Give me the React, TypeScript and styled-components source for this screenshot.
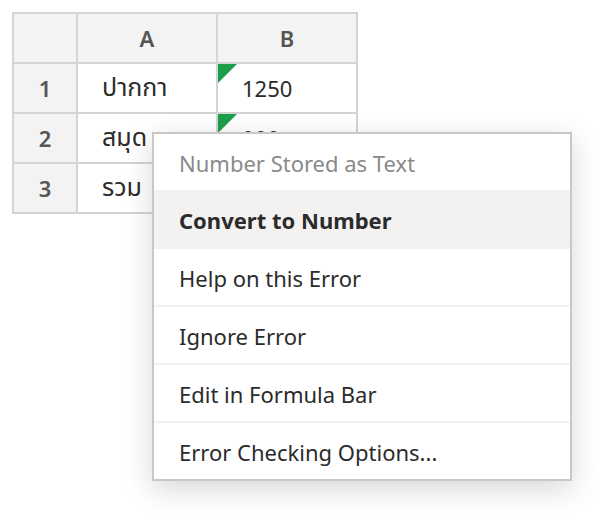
import styled, { createGlobalStyle } from 'styled-components';

const GlobalStyle = createGlobalStyle`
    body {
        margin: 0;
        background: #ffffff;
        font-family: "Noto Sans", "Open Sans", "Noto Sans Thai", sans-serif;
    }
`;

const Page = styled.div`
    position: relative;
    width: 602px;
    height: 520px;
    padding: 12px;
    box-sizing: border-box;
`;

const Sheet = styled.div`
    display: grid;
    grid-template-columns: 64px 140px 140px;
    grid-auto-rows: 50px;
    width: 346px;
    border-top: 2px solid #d4d4d4;
    border-left: 2px solid #d4d4d4;
    box-sizing: border-box;
`;

const Cell = styled.div<{ $header?: boolean; $center?: boolean; $thai?: boolean }>`
    position: relative;
    display: flex;
    align-items: center;
    justify-content: ${(p) => (p.$center ? 'center' : 'flex-start')};
    padding-left: ${(p) => (p.$center ? '0' : '24px')};
    border-right: 2px solid #d4d4d4;
    border-bottom: 2px solid #d4d4d4;
    background: ${(p) => (p.$header ? '#f3f3f3' : '#ffffff')};
    color: ${(p) => (p.$header ? '#555555' : '#2b2b2b')};
    font-size: ${(p) => (p.$thai ? '25px' : '22px')};
    font-weight: ${(p) => (p.$header ? 600 : 400)};
`;

const ErrorMark = styled.span`
    position: absolute;
    top: 0;
    left: 0;
    width: 0;
    height: 0;
    border-top: 19px solid #1c9e4b;
    border-right: 19px solid transparent;
`;

const Menu = styled.div`
    position: absolute;
    left: 152px;
    top: 132px;
    width: 420px;
    background: #ffffff;
    border: 2px solid #c8c8c8;
    box-sizing: border-box;
    box-shadow: 0 8px 28px rgba(0, 0, 0, 0.16);
    display: flex;
    flex-direction: column;
`;

const MenuTitle = styled.div`
    height: 56px;
    display: flex;
    align-items: center;
    padding: 2px 0 0 25px;
    box-sizing: border-box;
    font-size: 22px;
    color: #8a8a8a;
`;

const MenuItem = styled.div<{ $active?: boolean; $last?: boolean }>`
    height: ${(p) => (p.$active ? '59px' : p.$last ? '56px' : '58px')};
    display: flex;
    align-items: center;
    padding: 2px 0 0 25px;
    box-sizing: border-box;
    font-size: 22px;
    color: #2b2b2b;
    font-weight: ${(p) => (p.$active ? 700 : 400)};
    background: ${(p) => (p.$active ? '#f3f2f1' : '#ffffff')};
    border-bottom: ${(p) => (p.$last ? 'none' : '2px solid #f1f1f1')};
    flex-shrink: 0;
`;

const rows = [
    { n: '1', a: 'ปากกา', b: '1250', mark: true },
    { n: '2', a: 'สมุด', b: '900', mark: true },
    { n: '3', a: 'รวม', b: '', mark: false },
];

const items = [
    'Help on this Error',
    'Ignore Error',
    'Edit in Formula Bar',
    'Error Checking Options...',
];

export default function App() {
    return (
        <>
            <GlobalStyle />
            <Page>
                <Sheet>
                    <Cell $header $center />
                    <Cell $header $center>A</Cell>
                    <Cell $header $center>B</Cell>
                    {rows.map((r) => (
                        <>
                            <Cell key={r.n + 'n'} $header $center>{r.n}</Cell>
                            <Cell key={r.n + 'a'} $thai>{r.a}</Cell>
                            <Cell key={r.n + 'b'}>
                                {r.mark && <ErrorMark />}
                                {r.b}
                            </Cell>
                        </>
                    ))}
                </Sheet>
                <Menu>
                    <MenuTitle>Number Stored as Text</MenuTitle>
                    <MenuItem $active>Convert to Number</MenuItem>
                    {items.map((t, i) => (
                        <MenuItem key={t} $last={i === items.length - 1}>{t}</MenuItem>
                    ))}
                </Menu>
            </Page>
        </>
    );
}
